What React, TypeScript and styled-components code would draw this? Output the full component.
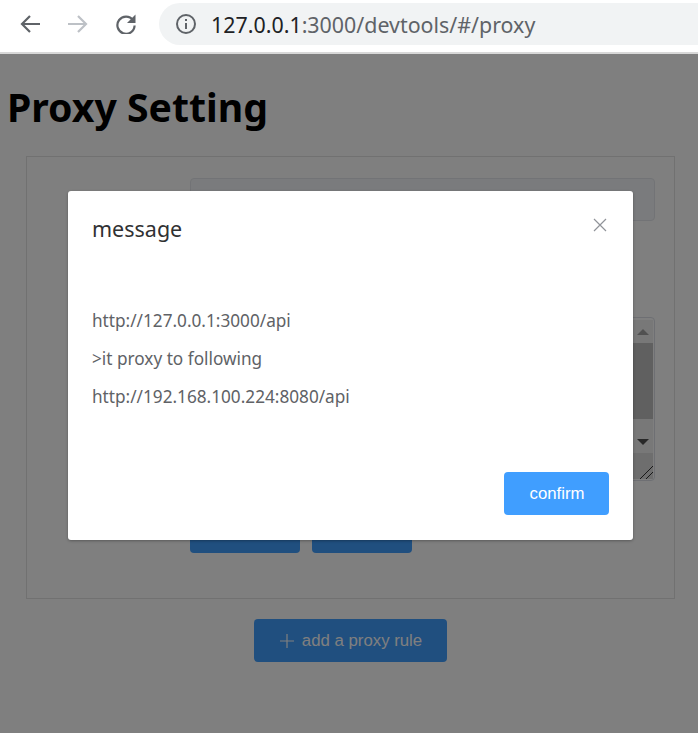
import React from 'react';
import styled, { createGlobalStyle } from 'styled-components';

const GlobalStyle = createGlobalStyle`
  html, body {
    margin: 0;
    padding: 0;
    background: #fff;
    font-family: "Noto Sans", "Open Sans", sans-serif;
  }
  * {
    box-sizing: border-box;
  }
`;

const Screen = styled.div`
  position: relative;
  width: 698px;
  height: 733px;
  overflow: hidden;
`;

const Toolbar = styled.header`
  display: flex;
  align-items: center;
  height: 54px;
  padding: 0 0 4px 20px;
  background: #fff;
  border-bottom: 2px solid #d8d8d8;
`;

const NavIcon = styled.svg`
  display: block;
  width: 20px;
  height: 20px;
  margin-right: 28px;
  flex: none;
`;

const AddressBar = styled.div`
  display: flex;
  align-items: center;
  flex: 1;
  height: 42px;
  margin-left: -5px;
  padding-left: 16px;
  background: #f1f3f4;
  border-radius: 21px 0 0 21px;
`;

const InfoIcon = styled.svg`
  display: block;
  width: 22px;
  height: 22px;
  margin-right: 14px;
  flex: none;
`;

const Url = styled.div`
  font-size: 21.4px;
  color: #5f6368;
  white-space: nowrap;
`;

const UrlHost = styled.span`
  color: #202124;
`;

const Page = styled.main`
  padding-bottom: 40px;
`;

const Title = styled.h1`
  margin: 0;
  padding: 25px 0 22px 7px;
  font-size: 39.2px;
  line-height: 55px;
  font-weight: 700;
  color: #000;
`;

const Card = styled.section`
  height: 443px;
  margin: 0 23px 0 26px;
  padding: 21px 19px 0 163px;
  border: 1px solid #e2e2e2;
`;

const DisabledInput = styled.div`
  height: 43px;
  margin-bottom: 96px;
  background: #f5f7fa;
  border: 1px solid #e4e7ed;
  border-radius: 4px;
`;

const RuleArea = styled.div`
  display: flex;
  justify-content: flex-end;
  height: 164px;
  margin-bottom: 29px;
  padding: 2px 1px 1px 0;
  background: #fff;
  border: 1px solid #dcdfe6;
  border-radius: 4px;
`;

const Scrollbar = styled.div`
  display: flex;
  flex-direction: column;
  width: 21px;
  background: #f1f1f1;
`;

const ScrollArrow = styled.div<{ $down?: boolean }>`
  display: flex;
  align-items: center;
  justify-content: center;
  height: 23px;
  flex: none;

  &::before {
    content: '';
    border-left: 6px solid transparent;
    border-right: 6px solid transparent;
    ${(p) =>
      p.$down
        ? 'border-top: 6px solid #505050;'
        : 'border-bottom: 6px solid #a3a3a3;'}
  }
`;

const ScrollTrack = styled.div`
  flex: 1;
`;

const ScrollThumb = styled.div`
  height: 76px;
  background: #c1c1c1;
`;

const ResizeCorner = styled.div`
  height: 26px;
  flex: none;
  background: #dcdcdc;
  display: flex;
  justify-content: flex-end;
  align-items: flex-end;
`;

const Grip = styled.svg`
  display: block;
  width: 14px;
  height: 14px;
`;

const ButtonRow = styled.div`
  display: flex;
  gap: 12px;
`;

const Button = styled.button<{ $width: number }>`
  display: flex;
  align-items: center;
  justify-content: center;
  gap: 8px;
  width: ${(p) => p.$width}px;
  height: 43px;
  padding: 0 0 0 1px;
  background: #409eff;
  border: 0;
  border-radius: 4px;
  color: #fff;
  font-family: "Liberation Sans", Arial, sans-serif;
  font-size: 16.8px;
`;

const AddRow = styled.div`
  display: flex;
  justify-content: center;
  margin-top: 20px;
  padding-left: 3px;
`;

const PlusIcon = styled.svg`
  display: block;
  width: 14px;
  height: 14px;
`;

const Mask = styled.div`
  position: absolute;
  top: 54px;
  left: 0;
  right: 0;
  bottom: 0;
  padding: 137px 0 0 68px;
  background: rgba(0, 0, 0, 0.5);
`;

const Dialog = styled.div`
  position: relative;
  width: 565px;
  height: 349px;
  padding: 20px 24px 25px;
  background: #fff;
  border-radius: 3px;
  box-shadow: 0 1px 3px rgba(0, 0, 0, 0.3);
  display: flex;
  flex-direction: column;
`;

const DialogTitle = styled.div`
  font-size: 21.5px;
  line-height: 36px;
  color: #303133;
`;

const DialogBody = styled.div`
  flex: 1;
  padding-top: 62px;
  color: #606266;
  font-size: 17.2px;
`;

const Line = styled.p`
  margin: 0 0 15px;
  line-height: 23px;
`;

const DialogFooter = styled.div`
  display: flex;
  justify-content: flex-end;
`;

const CloseButton = styled.svg`
  position: absolute;
  top: 27px;
  right: 26px;
  width: 14px;
  height: 14px;
`;

const App = () => (
  <Screen>
    <GlobalStyle />
    <Toolbar>
      <NavIcon viewBox="0 0 20 20" fill="none" stroke="#5f6368" strokeWidth="2.2">
        <path d="M20 10H2M10 2l-8 8 8 8" />
      </NavIcon>
      <NavIcon viewBox="0 0 20 20" fill="none" stroke="#bdc1c6" strokeWidth="2.2">
        <path d="M0 10h18M10 2l8 8-8 8" />
      </NavIcon>
      <NavIcon viewBox="0 0 20 20" fill="none">
        <path d="M17 6.2A8.6 8.6 0 1 0 18.6 11.5" stroke="#5f6368" strokeWidth="2.2" />
        <path d="M19.5 0.5V9h-8.5z" fill="#5f6368" />
      </NavIcon>
      <AddressBar>
        <InfoIcon viewBox="0 0 22 22" fill="none">
          <circle cx="11" cy="11" r="9" stroke="#5f6368" strokeWidth="2" />
          <path d="M11 10v6" stroke="#5f6368" strokeWidth="2" />
          <path d="M11 6v2" stroke="#5f6368" strokeWidth="2" />
        </InfoIcon>
        <Url>
          <UrlHost>127.0.0.1</UrlHost>:3000/devtools/#/proxy
        </Url>
      </AddressBar>
    </Toolbar>
    <Page>
      <Title>Proxy Setting</Title>
      <Card>
        <DisabledInput />
        <RuleArea>
          <Scrollbar>
            <ScrollArrow />
            <ScrollThumb />
            <ScrollTrack />
            <ScrollArrow $down />
            <ResizeCorner>
              <Grip viewBox="0 0 14 14" stroke="#333" strokeWidth="1" fill="none">
                <path d="M1 14L14 1M7 14l7-7" />
              </Grip>
            </ResizeCorner>
          </Scrollbar>
        </RuleArea>
        <ButtonRow>
          <Button $width={110} />
          <Button $width={100} />
        </ButtonRow>
      </Card>
      <AddRow>
        <Button $width={193}>
          <PlusIcon viewBox="0 0 14 14" stroke="#fff" strokeWidth="1.2">
            <path d="M7 0v14M0 7h14" />
          </PlusIcon>
          add a proxy rule
        </Button>
      </AddRow>
    </Page>
    <Mask>
      <Dialog>
        <DialogTitle>message</DialogTitle>
        <CloseButton viewBox="0 0 14 14" stroke="#909399" strokeWidth="1.2">
          <path d="M1 1l12 12M13 1L1 13" />
        </CloseButton>
        <DialogBody>
          <Line>http://127.0.0.1:3000/api</Line>
          <Line>&gt;it proxy to following</Line>
          <Line>http://192.168.100.224:8080/api</Line>
        </DialogBody>
        <DialogFooter>
          <Button $width={105}>confirm</Button>
        </DialogFooter>
      </Dialog>
    </Mask>
  </Screen>
);

export default App;
